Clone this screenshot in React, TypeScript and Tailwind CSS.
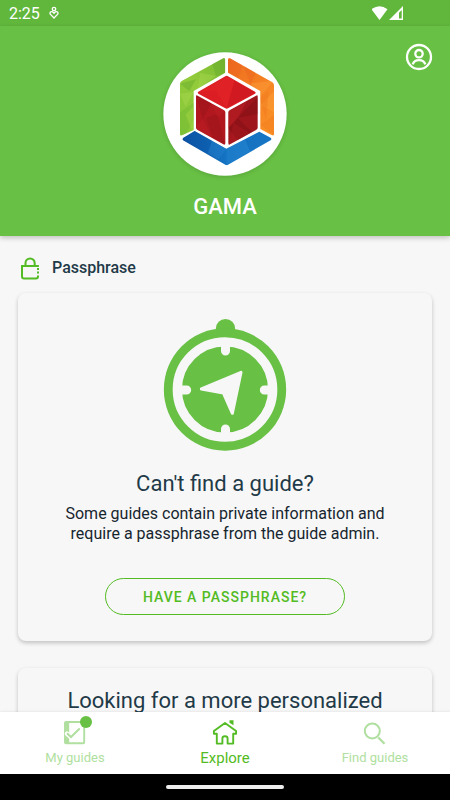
import React from "react"

function StatusBar() {
  return (
    <div className="flex h-[26px] items-center justify-between bg-[#61b73c] pl-[9px] pr-[46px] text-white">
      <div className="flex items-center gap-[9px]">
        <span className="pt-px text-base leading-[26px]">2:25</span>
        <svg className="h-[14px] w-[10px]" viewBox="0 0 10 14" fill="none" stroke="currentColor" strokeWidth="1.3">
          <circle cx="5" cy="3" r="1.700" />
          <path d="M5 12 1.300 8.200C.4 6.400 2 5 3.600 5.800L5 7.300l1.400-1.500C8 5 9.600 6.400 8.700 8.200Z" />
        </svg>
      </div>
      <svg className="h-[15px] w-8" viewBox="0 0 32 15" fill="currentColor">
        <path d="M-.5 3.200Q7.500-2.700 15.500 3.200L7.500 14Z" />
        <path fillRule="evenodd" d="M31 0V14H17ZM29.700 4L27 6.800V12.500H29.700Z" />
      </svg>
    </div>
  )
}

function GamaLogo() {
  return (
    <svg className="h-[124px] w-[124px] drop-shadow-sm" viewBox="24 20 372 372">
      <defs>
        <linearGradient id="leaf" x1="1" y1="0" x2="0" y2="1">
          <stop offset="0" stopColor="#76b82f" />
          <stop offset=".5" stopColor="#93cb3b" />
          <stop offset="1" stopColor="#86c73a" />
        </linearGradient>
        <linearGradient id="amber" x1="0" y1="0" x2="1" y2="1">
          <stop offset="0" stopColor="#ee6b1e" />
          <stop offset="1" stopColor="#fb9427" />
        </linearGradient>
        <linearGradient id="water" x1="0" y1="0" x2="1" y2="0">
          <stop offset="0" stopColor="#0d4b9c" />
          <stop offset=".5" stopColor="#1474c4" />
          <stop offset="1" stopColor="#2080cc" />
        </linearGradient>
        <clipPath id="left">
          <path d="M75 116Q75 110 80 107L205 39Q211 37 211 43V82L116 137V254L81 270Q75 272 75 266Z" />
        </clipPath>
        <clipPath id="right">
          <path d="M219 43Q219 37 225 39L352 111Q357 114 357 120V266Q357 272 351 270L316 251V137L219 82Z" />
        </clipPath>
        <clipPath id="bottom">
          <path d="M84 285Q80 281 85 277L119 257L214 310L313 259L347 277Q352 281 347 285L219 358Q215 361 211 358Z" />
        </clipPath>
      </defs>
      <circle cx="210" cy="206" r="185" fill="#fff" />
      <g clipPath="url(#left)">
        <path fill="url(#leaf)" d="M70 30h145v250H70z" />
        <path fill="#69ad2d" d="M170 50l41-15v45l-28 13zM75 115l48-13-20 35z" opacity=".5" />
        <path fill="#b0dc52" d="M135 83l48 8-54 39zM75 145l41-5-24 45z" opacity=".35" />
        <path fill="#68b22f" d="M75 200l41-27v50l-26 48H75z" opacity=".3" />
        <path fill="#a3d543" d="M92 208l24-26v88z" opacity=".5" />
      </g>
      <g clipPath="url(#right)">
        <path fill="url(#amber)" d="M215 30h145v245H215z" />
        <path fill="#e85f20" d="M219 37l45 20-14 40-31-16zM264 57l38 25-15 38z" opacity=".35" />
        <path fill="#ffac45" d="M287 114l70-8-41 47zM316 180l41-42v62z" opacity=".3" />
        <path fill="#ef781f" d="M316 158l25-20-8 90zM316 238l41-28v60z" opacity=".4" />
      </g>
      <g clipPath="url(#bottom)">
        <path fill="url(#water)" d="M78 250h275v115H78z" />
        <path fill="#0a59ad" d="M84 282l35-26 52 30-13 37z" opacity=".4" />
        <path fill="#2a8bd3" d="M171 286l44 24-25 32-32-19zM215 310l55-28 15 35-70 43z" opacity=".3" />
        <path fill="#0f69b9" d="M270 282l43-23 37 22-65 36z" opacity=".4" />
      </g>
      <path fill="#dc1d23" d="M130 139l81-46q4-3 8 0l81 46q4 3 0 6l-81 44q-4 2-8 0l-81-44q-4-3 0-6z" />
      <path fill="#f0302e" d="M135 139l80-45 24 13-59 28zM180 132l59-28-24 83z" opacity=".2" />
      <path fill="#bd151c" d="M239 107l60 35-83 44z" opacity=".4" />
      <path fill="#b0171e" d="M123 153q0-5 5-2l78 43q5 3 5 7v92q0 7-6 4l-77-43q-5-3-5-7z" />
      <path fill="#871219" d="M125 152l43 22-25 47zM143 221l44-14 22 89-37-20z" opacity=".3" />
      <path fill="#d9292b" d="M123 241l30-26 20 62-47-27zM168 174l43 24-24 18z" opacity=".2" />
      <path fill="#9f151c" d="M220 201q0-4 5-7l78-43q5-3 5 2v94q0 4-5 7l-78 43q-5 3-5-4z" />
      <path fill="#c5232a" d="M222 198l53-29-27 49-28 30z" opacity=".45" />
      <path fill="#690e14" d="M248 218l60-62v50zM220 249l28-31 43 42-43 25z" opacity=".3" />
      <path fill="#c41e25" d="M235 232l50 31-63 35z" opacity=".25" />
    </svg>
  )
}

function Compass() {
  return (
    <svg className="mx-auto h-[132px] w-[124px]" viewBox="39 27 372 396">
      <g fill="#68c044">
        <circle cx="226.500" cy="56" r="29" />
        <circle cx="225" cy="238.500" r="183.500" />
      </g>
      <circle cx="225" cy="238.500" r="143" fill="none" stroke="#f7f7f7" strokeWidth="28" />
      <path
        d="M226.500 107V123M226.500 371V357M94 240H110M357 240H343"
        stroke="#f7f7f7"
        strokeWidth="27"
        strokeLinecap="round"
      />
      <path
        d="M154 237 273 187 247 310 220 249Z"
        fill="#f7f7f7"
        stroke="#f7f7f7"
        strokeWidth="9"
        strokeLinejoin="round"
      />
    </svg>
  )
}

function LockIcon() {
  return (
    <svg className="h-[23px] w-[18px]" viewBox="0 0 18 23" fill="none" stroke="#53bb23" strokeWidth="2">
      <path d="M4.500 9V6a4.600 4.600 0 0 1 9.200 0v3M17.900 8.900H1V19.500Q1 21.500 3 21.500H15Q17 21.500 17 19.500V18.500" />
      <path d="M17 11v2M17 14.500v2" />
    </svg>
  )
}

function GuidesIcon() {
  return (
    <svg className="h-6 w-6" viewBox="0 0 24 24" fill="none">
      <rect x="2" y="1" width="19.200" height="21.200" rx="1" stroke="#b0dfa0" strokeWidth="1.900" />
      <path d="M1.500 1H6.200V22H1.500Z" fill="#b0dfa0" />
      <path d="M4 12.700 8 16.200 16.500 8" stroke="#fff" strokeWidth="4.600" strokeLinecap="round" />
      <path d="M4 12.300 8 16 16.700 7.500" stroke="#b0dfa0" strokeWidth="2" />
    </svg>
  )
}

function HomeIcon() {
  return (
    <svg className="h-[26px] w-[26px]" viewBox="0 0 26 26" fill="none" stroke="#53bb23" strokeWidth="1.900">
      <path
        d="M13 3 1.900 11V13.800H4.800V23.600H10.400V18.400Q10.400 16.300 13 16.300T15.600 18.400V23.600H21.200V13.800H24.100V11Z"
        strokeLinejoin="round"
      />
      <path d="M17.500 .3H21.500V5.200L17.500 2.800Z" fill="#53bb23" stroke="none" />
    </svg>
  )
}

function SearchIcon() {
  return (
    <svg className="h-6 w-6" viewBox="0 0 24 24" fill="none" stroke="#b0dfa0" strokeWidth="2">
      <circle cx="9.300" cy="10" r="7.500" />
      <path d="M15.300 16.500 21.500 22.700" strokeWidth="2.300" />
    </svg>
  )
}

export default function App() {
  const tabs = [
    { label: "My guides", icon: <GuidesIcon />, active: false, badge: true },
    { label: "Explore", icon: <HomeIcon />, active: true, badge: false },
    { label: "Find guides", icon: <SearchIcon />, active: false, badge: false },
  ]

  return (
    <div className="flex h-screen flex-col overflow-hidden bg-[#f7f7f7] font-['Roboto',sans-serif] text-[#1f3a48]">
      <StatusBar />

      <header className="relative z-10 flex flex-col items-center bg-[#68c044] pt-[26px] pb-[14px] shadow-[0_2px_5px_rgba(0,0,0,0.22)]">
        <GamaLogo />
        <h1 className="mt-4 text-[22px] leading-[30px] font-medium text-white">GAMA</h1>
        <button type="button" aria-label="Profile" className="absolute top-[17px] right-[17px]">
          <svg className="h-7 w-7" viewBox="0 0 28 28" fill="none" stroke="#fff" strokeWidth="2.300">
            <circle cx="14" cy="14" r="12" />
            <circle cx="14" cy="10.700" r="3.700" />
            <path d="M7.700 21.300Q9.200 17.200 14 17.200T20.300 21.300" />
          </svg>
        </button>
      </header>

      <main className="min-h-0 flex-1 overflow-hidden px-[18px] pt-5">
        <div className="flex h-6 items-center gap-[13px] pl-[3px]">
          <LockIcon />
          <h2 className="text-base font-medium">Passphrase</h2>
        </div>

        <section className="mt-[13px] rounded-lg px-6 pt-[26px] pb-[26px] text-center shadow-[0_2px_4px_rgba(0,0,0,0.22)]">
          <Compass />
          <h3 className="mt-[18px] text-[22px] leading-[30px]">Can't find a guide?</h3>
          <p className="mx-auto mt-[5px] max-w-[350px] text-base leading-5 text-[#16252e]">
            Some guides contain private information and require a passphrase from the guide admin.
          </p>
          <button
            type="button"
            className="mt-[34px] h-[37px] w-60 rounded-full border border-[#53bb23] text-sm font-medium tracking-[1px] text-[#53bb23]"
          >
            HAVE A PASSPHRASE?
          </button>
        </section>

        <section className="mt-[27px] rounded-lg px-6 pt-[18px] pb-6 text-center shadow-[0_2px_4px_rgba(0,0,0,0.22)]">
          <h3 className="text-[22px] leading-[30px]">Looking for a more personalized</h3>
        </section>
      </main>

      <nav className="relative z-10 grid h-[62px] grid-cols-3 bg-white shadow-[0_-1px_2px_rgba(0,0,0,0.06)]">
        {tabs.map((tab) => (
          <a key={tab.label} href="#" className="flex flex-col items-center pt-[7px]">
            <span className="relative flex h-[27px] items-center">
              {tab.icon}
              {tab.badge && (
                <span className="absolute -top-[3px] -right-[5px] h-3 w-3 rounded-full bg-[#68c044]" />
              )}
            </span>
            <span
              className={
                tab.active
                  ? "text-[15px] leading-6 text-[#53bb23]"
                  : "text-[13px] leading-6 text-[#b0dfa0]"
              }
            >
              {tab.label}
            </span>
          </a>
        ))}
      </nav>

      <div className="flex h-[26px] items-center justify-center bg-black">
        <div className="h-1 w-[118px] rounded-full bg-[#eeeeee]" />
      </div>
    </div>
  )
}
